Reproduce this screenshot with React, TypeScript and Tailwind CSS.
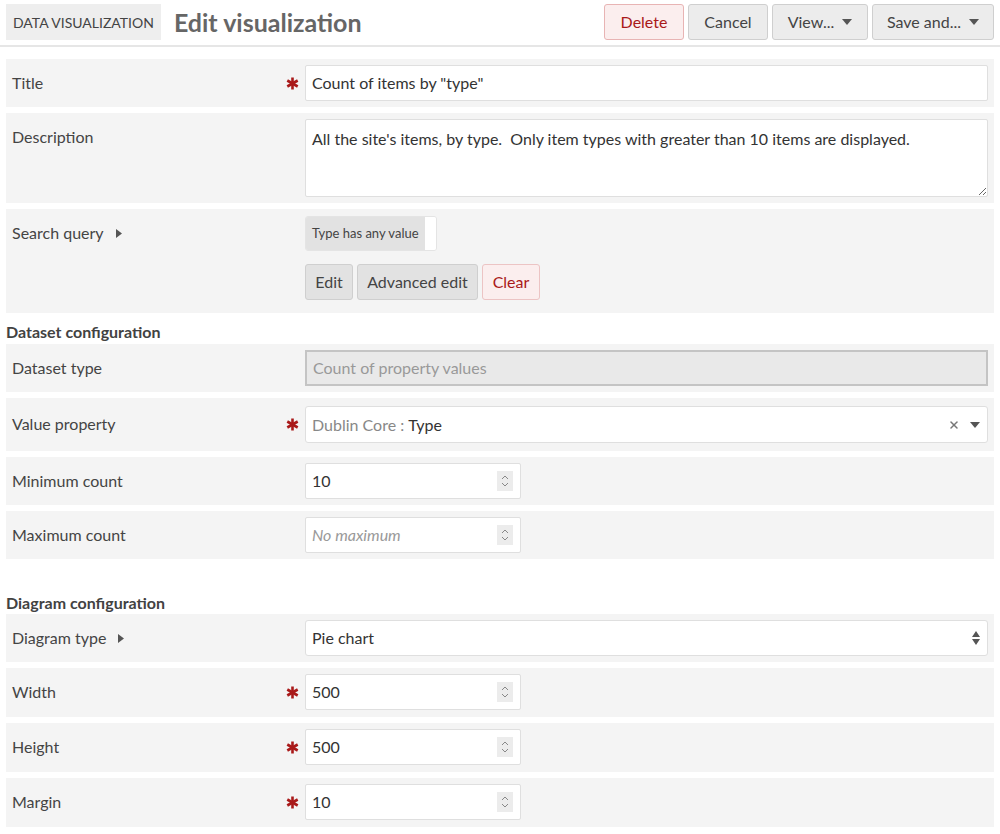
import React from "react";
import { X } from "lucide-react";

const font = { fontFamily: "Lato, 'Open Sans', sans-serif" };

function Caret() {
  return (
    <svg width="6" height="9" viewBox="0 0 6 9" className="ml-3 inline-block">
      <path d="M0 0 L6 4.5 L0 9 Z" fill="#555" />
    </svg>
  );
}

function Down({ className = "" }: { className?: string }) {
  return (
    <svg width="10" height="6" viewBox="0 0 10 6" className={className}>
      <path d="M0 0 L10 0 L5 6 Z" fill="currentColor" />
    </svg>
  );
}

// red required marker, six spokes
function Req() {
  return (
    <span className="flex h-[36px] items-center">
      <svg width="13" height="13" viewBox="0 0 13 13">
        <g stroke="#a91919" strokeWidth="2.6" strokeLinecap="butt">
          <line x1="6.5" y1="0.5" x2="6.5" y2="12.5" />
          <line x1="1.3" y1="3.5" x2="11.7" y2="9.5" />
          <line x1="1.3" y1="9.5" x2="11.7" y2="3.5" />
        </g>
      </svg>
    </span>
  );
}

function Spin() {
  return (
    <span className="flex h-[20px] w-[16px] flex-col items-center justify-center bg-[#ececec]">
      <svg width="8" height="14" viewBox="0 0 8 14">
        <path d="M1 5 L4 2 L7 5 M1 9 L4 12 L7 9" fill="none" stroke="#888" strokeWidth="1" />
      </svg>
    </span>
  );
}

function Row({
  label,
  required,
  caret,
  className = "",
  children,
}: {
  label: string;
  required?: boolean;
  caret?: boolean;
  className?: string;
  children: React.ReactNode;
}) {
  return (
    <div className={`flex bg-[#f4f4f4] p-[6px] ${className}`}>
      <div className="flex w-[293px] shrink-0 justify-between pr-[6px]">
        <div className="flex h-[36px] items-center text-[16px] text-[#444]">
          {label}
          {caret && <Caret />}
        </div>
        {required && <Req />}
      </div>
      <div className="flex-1">{children}</div>
    </div>
  );
}

function NumberBox({ value, placeholder }: { value?: string; placeholder?: string }) {
  return (
    <div className="flex h-[36px] w-[216px] items-center justify-between rounded-[2px] border border-[#dfdfdf] bg-white pl-[6px] pr-[7px]">
      {value ? (
        <span className="text-[16px] text-[#333]">{value}</span>
      ) : (
        <span className="text-[16px] italic text-[#999]">{placeholder}</span>
      )}
      <Spin />
    </div>
  );
}

function SectionHead({ children, className = "" }: { children: React.ReactNode; className?: string }) {
  return <div className={`text-[16px] font-bold leading-[19px] text-[#424242] ${className}`}>{children}</div>;
}

export default function App() {
  return (
    <div style={font} className="min-h-[834px] bg-white px-[6px]">
      {/* Header */}
      <div className="-mx-[6px] flex items-center border-b-2 border-[#e6e6e6] px-[6px] pb-[5px] pt-1">
        <div className="flex h-[36px] items-center bg-[#eeeeee] px-[7px] text-[14px] uppercase text-[#444]">
          Data Visualization
        </div>
        <h1 className="ml-[13px] text-[25px] font-bold leading-[36px] text-[#666]">Edit visualization</h1>
        <div className="ml-auto flex gap-1">
          <button className="h-[36px] w-[80px] rounded-[3px] border border-[#e8b4b4] bg-[#fbeeee] text-[16px] text-[#a91919]">
            Delete
          </button>
          <button className="h-[36px] w-[80px] rounded-[3px] border border-[#cfcfcf] bg-[#ececec] text-[16px] text-[#444]">
            Cancel
          </button>
          <button className="flex h-[36px] w-[96px] items-center justify-center gap-2 rounded-[3px] border border-[#cfcfcf] bg-[#ececec] text-[16px] text-[#444]">
            View... <Down className="text-[#555]" />
          </button>
          <button className="flex h-[36px] w-[122px] items-center justify-center gap-2 rounded-[3px] border border-[#cfcfcf] bg-[#ececec] text-[16px] text-[#444]">
            Save and... <Down className="text-[#555]" />
          </button>
        </div>
      </div>

      <div className="mt-[12px] flex flex-col gap-[6px]">
        <Row label="Title" required>
          <div className="flex h-[36px] items-center rounded-[2px] border border-[#dfdfdf] bg-white px-[6px] text-[16px] text-[#333]">
            Count of items by "type"
          </div>
        </Row>

        <Row label="Description">
          <textarea
            readOnly
            defaultValue="All the site's items, by type.  Only item types with greater than 10 items are displayed."
            className="block h-[78px] w-full resize-y rounded-[2px] border border-[#dfdfdf] bg-white px-[6px] py-[7px] text-[16px] text-[#333] outline-none"
            style={font}
          />
        </Row>

        <Row label="Search query" caret className="pb-[13px]">
          <div className="pt-px">
            <div className="inline-flex h-[35px] overflow-hidden rounded-[3px] border border-[#e4e4e4]">
              <span className="flex items-center bg-[#e2e2e2] px-[6px] text-[13px] text-[#444]">Type has any value</span>
              <span className="w-[11px] bg-white" />
            </div>
            <div className="mt-[13px] flex gap-1">
              <button className="h-[36px] w-[48px] rounded-[3px] border border-[#cfcfcf] bg-[#e2e2e2] text-[16px] text-[#444]">
                Edit
              </button>
              <button className="h-[36px] w-[121px] rounded-[3px] border border-[#cfcfcf] bg-[#e2e2e2] text-[16px] text-[#444]">
                Advanced edit
              </button>
              <button className="h-[36px] w-[58px] rounded-[3px] border border-[#ecc4c4] bg-[#fbeeee] text-[16px] text-[#a91919]">
                Clear
              </button>
            </div>
          </div>
        </Row>

        <SectionHead className="mt-[3px] -mb-[3px]">Dataset configuration</SectionHead>

        <Row label="Dataset type">
          <div className="flex h-[36px] items-center border-2 border-[#c4c4c4] bg-[#e9e9e9] px-[6px] text-[16px] text-[#999]">
            Count of property values
          </div>
        </Row>

        <Row label="Value property" required className="py-[8px]">
          <div className="flex h-[37px] items-center rounded-[3px] border border-[#dfdfdf] bg-white pl-[6px] pr-[7px] text-[16px]">
            <span className="text-[#888]">Dublin Core :</span>
            <span className="ml-1 text-[#333]">Type</span>
            <X className="ml-auto h-[12px] w-[12px] text-[#777]" strokeWidth={3} />
            <Down className="ml-[10px] text-[#555]" />
          </div>
        </Row>

        <Row label="Minimum count">
          <NumberBox value="10" />
        </Row>

        <Row label="Maximum count">
          <NumberBox placeholder="No maximum" />
        </Row>

        <SectionHead className="mt-[28px] -mb-[4px]">Diagram configuration</SectionHead>

        <Row label="Diagram type" caret>
          <div className="flex h-[36px] items-center justify-between rounded-[3px] border border-[#dfdfdf] bg-white pl-[6px] pr-[6px] text-[16px] text-[#333]">
            Pie chart
            <svg width="10" height="16" viewBox="0 0 10 16">
              <path d="M1 7 L5 1 L9 7 Z M1 9 L9 9 L5 15 Z" fill="#555" />
            </svg>
          </div>
        </Row>

        <Row label="Width" required className="pb-[7px]">
          <NumberBox value="500" />
        </Row>
        <Row label="Height" required className="pb-[7px]">
          <NumberBox value="500" />
        </Row>
        <Row label="Margin" required className="pb-[7px]">
          <NumberBox value="10" />
        </Row>
      </div>
    </div>
  );
}
